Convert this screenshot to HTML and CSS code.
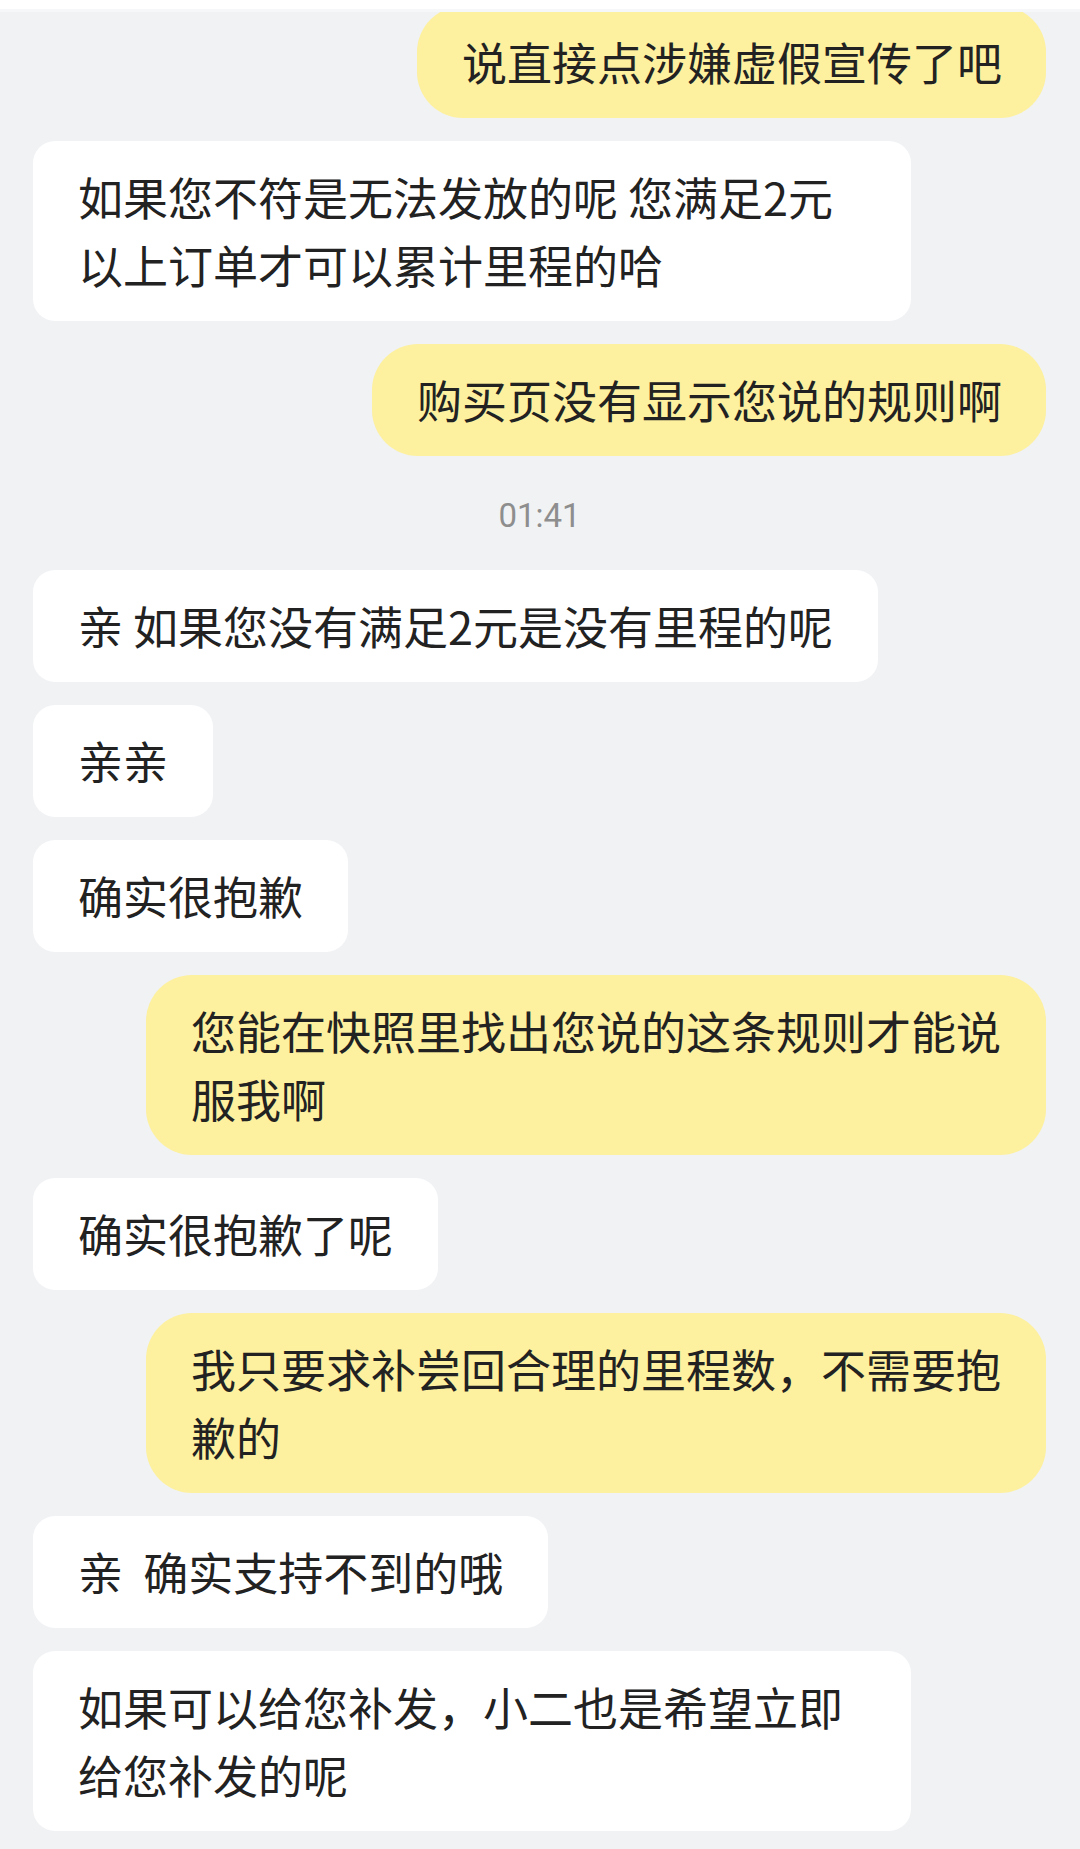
FILE: index.html
```html
<!DOCTYPE html>
<html>
<head>
	<title>聊天</title>
	<meta charset="UTF-8">
	<link rel="stylesheet" href="styles.css">
</head>
<body>
<div class="topbar"></div>
<div class="chat">
    <div class="msg mine first">说直接点涉嫌虚假宣传了吧</div>
    <div class="msg other">如果您不符是无法发放的呢 您满足2元以上订单才可以累计里程的哈</div>
    <div class="msg mine">购买页没有显示您说的规则啊</div>
    <div class="time">01:41</div>
    <div class="msg other">亲 如果您没有满足2元是没有里程的呢</div>
    <div class="msg other">亲亲</div>
    <div class="msg other">确实很抱歉</div>
    <div class="msg mine">您能在快照里找出您说的这条规则才能说服我啊</div>
    <div class="msg other">确实很抱歉了呢</div>
    <div class="msg mine">我只要求补尝回合理的里程数，不需要抱歉的</div>
    <div class="msg other">亲&nbsp;&nbsp;确实支持不到的哦</div>
    <div class="msg other">如果可以给您补发，小二也是希望立即给您补发的呢</div>
</div>
</body>
</html>
```

FILE: styles.css
```css
body
{
	margin: 0; background: #f1f2f4; font-family: "Noto Sans CJK SC", "Noto Sans", sans-serif; color: #222;
}
.topbar
{
	height: 9px; background: #fff; border-bottom: 3px solid #f6f7f9; position: relative; z-index: 1;
}
.chat
{
	height: 1837px; overflow: hidden; padding: 0 34px 0 33px; box-sizing: border-box;
	display: flex; flex-direction: column; gap: 22.5px;
}
.msg
{
	box-sizing: border-box; width: fit-content; padding: 22.25px 45px; font-size: 45px; line-height: 68px;
	word-break: break-all;
}
.msg.first { margin-top: -6.5px; }
.other
{
	align-self: flex-start; max-width: 878px; background: #fff; border-radius: 22px;
}
.mine
{
	align-self: flex-end; max-width: 900px; padding-right: 44px; background: #fdf09e; border-radius: 46px;
}
.time
{
	align-self: center; font-family: Roboto, "Noto Sans", sans-serif; font-size: 33px; line-height: 48px;
	color: #8e8e8e; margin: 13.5px 0 7px;
}
```
